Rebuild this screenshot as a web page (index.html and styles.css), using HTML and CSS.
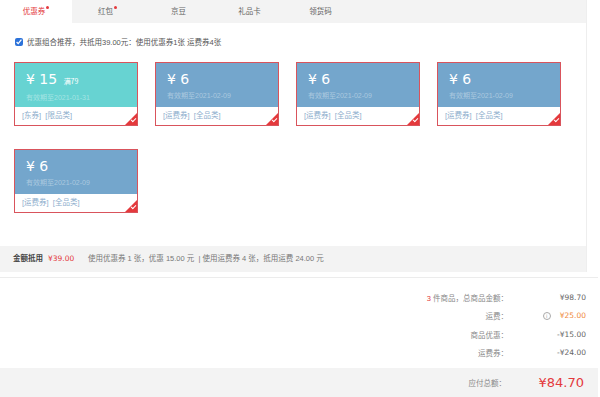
FILE: index.html
```html
<!DOCTYPE html>
<html lang="zh-CN">
<head>
    <meta charset="UTF-8">
    <title>优惠券</title>
    <link rel="stylesheet" href="styles.css">
</head>
<body>

    <!-- Bloque de cupones -->
    <div class="panel">
        <div class="panel-inner">
            <div class="tabs">
                <div class="tab active">优惠券<i class="dot"></i></div>
                <div class="tab">红包<i class="dot"></i></div>
                <div class="tab">京豆</div>
                <div class="tab">礼品卡</div>
                <div class="tab">领货码</div>
            </div>

            <label class="tip">
                <input type="checkbox" checked>
                <span>优惠组合推荐，共抵用39.00元：使用优惠券1张 运费券4张</span>
            </label>

            <div class="coupons">
                <div class="coupon teal">
                    <div class="coupon-top">
                        <div class="amount">¥ 15 <small>满79</small></div>
                        <div class="date">有效期至2021-01-31</div>
                    </div>
                    <div class="coupon-tags">[东券] &nbsp;[限品类]</div>
                    <span class="check"></span>
                </div>
                <div class="coupon">
                    <div class="coupon-top">
                        <div class="amount">¥ 6</div>
                        <div class="date">有效期至2021-02-09</div>
                    </div>
                    <div class="coupon-tags">[运费券] &nbsp;[全品类]</div>
                    <span class="check"></span>
                </div>
                <div class="coupon">
                    <div class="coupon-top">
                        <div class="amount">¥ 6</div>
                        <div class="date">有效期至2021-02-09</div>
                    </div>
                    <div class="coupon-tags">[运费券] &nbsp;[全品类]</div>
                    <span class="check"></span>
                </div>
                <div class="coupon">
                    <div class="coupon-top">
                        <div class="amount">¥ 6</div>
                        <div class="date">有效期至2021-02-09</div>
                    </div>
                    <div class="coupon-tags">[运费券] &nbsp;[全品类]</div>
                    <span class="check"></span>
                </div>
                <div class="coupon">
                    <div class="coupon-top">
                        <div class="amount">¥ 6</div>
                        <div class="date">有效期至2021-02-09</div>
                    </div>
                    <div class="coupon-tags">[运费券] &nbsp;[全品类]</div>
                    <span class="check"></span>
                </div>
            </div>

            <div class="summary">
                <b>金额抵用</b>
                <span class="red price">¥39.00</span>
                <span class="summary-text">使用优惠券 1 张，优惠 15.00 元 &nbsp;| 使用运费券 4 张，抵用运费 24.00 元</span>
            </div>
        </div>
    </div>

    <!-- Totales -->
    <div class="totals">
        <div class="row">
            <span class="label"><em class="red">3</em> 件商品，总商品金额：</span>
            <span class="value">¥98.70</span>
        </div>
        <div class="row">
            <span class="label">运费：</span>
            <span class="value"><i class="info">i</i><span class="orange">¥25.00</span></span>
        </div>
        <div class="row">
            <span class="label">商品优惠：</span>
            <span class="value">-¥15.00</span>
        </div>
        <div class="row">
            <span class="label">运费券：</span>
            <span class="value">-¥24.00</span>
        </div>
    </div>

    <div class="pay">
        <span class="label">应付总额：</span>
        <span class="value red">¥84.70</span>
    </div>

</body>
</html>
```

FILE: styles.css
```css
body {
    margin: 0;
    padding: 0;
    font-family: "Liberation Sans", "Noto Sans CJK SC", sans-serif;
    font-size: 7.5px;
    color: #666;
    background: #fff;
}

.red {
    color: #e4393c;
}

.orange {
    color: #f08a3c;
}

.price, .value {
    font-family: "DejaVu Sans", "Noto Sans CJK SC", sans-serif;
}

/* Panel de cupones */
.panel {
    width: 598px;
    padding-bottom: 5px;
    border-bottom: 1px solid #ececec;
}

.panel-inner {
    width: 586px;
    border-right: 1px solid #eeeeee;
}

.tabs {
    display: flex;
    height: 23px;
    background: #f3f3f3;
}

.tab {
    width: 71px;
    line-height: 23px;
    text-align: center;
    color: #666;
}

.tab.active {
    width: 72px;
    background: #fff;
    color: #e4393c;
}

.dot {
    display: inline-block;
    width: 3px;
    height: 3px;
    border-radius: 50%;
    background: #e4393c;
    vertical-align: 5px;
    margin-left: 1px;
}

.tip {
    display: flex;
    align-items: center;
    height: 9px;
    padding: 14px 0 0 15px;
    color: #555;
}

.tip input {
    width: 8px;
    height: 8px;
    margin: 0 4px 0 0;
    accent-color: #2c72d9;
}

/* Tarjetas */
.coupons {
    display: flex;
    flex-wrap: wrap;
    column-gap: 17px;
    row-gap: 23px;
    padding: 16px 0 0 14px;
    width: 560px;
}

.coupon {
    position: relative;
    width: 122px;
    height: 62px;
    border: 1px solid #d9545c;
    background: #fff;
    overflow: hidden;
}

.coupon-top {
    height: 44px;
    background: #74a6cc;
    padding-left: 11px;
    box-sizing: border-box;
    padding-top: 7px;
}

.teal .coupon-top {
    background: #67d3d2;
}

.amount {
    font-family: "DejaVu Sans", sans-serif;
    font-size: 14px;
    line-height: 18px;
    color: #fff;
}

.amount small {
    font-family: "Noto Sans CJK SC", sans-serif;
    font-size: 7px;
    margin-left: 2px;
}

.date {
    font-size: 7px;
    margin-top: 2px;
    color: rgba(255, 255, 255, 0.4);
}

.coupon-tags {
    line-height: 18px;
    padding-left: 7px;
    color: #8cadcc;
}

.check {
    position: absolute;
    right: 0;
    bottom: 0;
    width: 0;
    height: 0;
    border-style: solid;
    border-width: 0 0 12px 12px;
    border-color: transparent transparent #e4393c transparent;
}

.check::after {
    content: "";
    position: absolute;
    left: -6px;
    top: 5px;
    width: 4px;
    height: 2px;
    border-left: 1px solid #fff;
    border-bottom: 1px solid #fff;
    transform: rotate(-45deg);
}

.summary {
    margin-top: 33px;
    height: 26px;
    line-height: 26px;
    padding-left: 13px;
    background: #f3f3f3;
    display: flex;
    gap: 5px;
}

.summary b {
    color: #444;
}

.summary .price {
    font-size: 7.5px;
    width: 35px;
}

.summary-text {
    color: #777;
}

/* Totales */
.totals {
    padding-top: 10px;
    padding-bottom: 6px;
}

.row, .pay {
    display: flex;
    justify-content: flex-end;
    align-items: center;
}

.row {
    height: 18.5px;
    padding-right: 14px;
}

.label {
    color: #888;
}

.label em {
    font-style: normal;
}

.row .value {
    display: flex;
    align-items: center;
    justify-content: flex-end;
    width: 78px;
    font-size: 7.5px;
    color: #666;
}

.info {
    display: inline-block;
    width: 6px;
    height: 6px;
    line-height: 6px;
    border: 1px solid #aaa;
    border-radius: 50%;
    font-size: 5px;
    font-style: normal;
    text-align: center;
    color: #999;
    margin-right: 9px;
}

.pay {
    height: 29px;
    background: #f3f3f3;
    width: 598px;
    padding-right: 14px;
    box-sizing: border-box;
}

.pay .value {
    width: 78px;
    text-align: right;
    font-size: 13px;
    color: #e4393c;
}
```
